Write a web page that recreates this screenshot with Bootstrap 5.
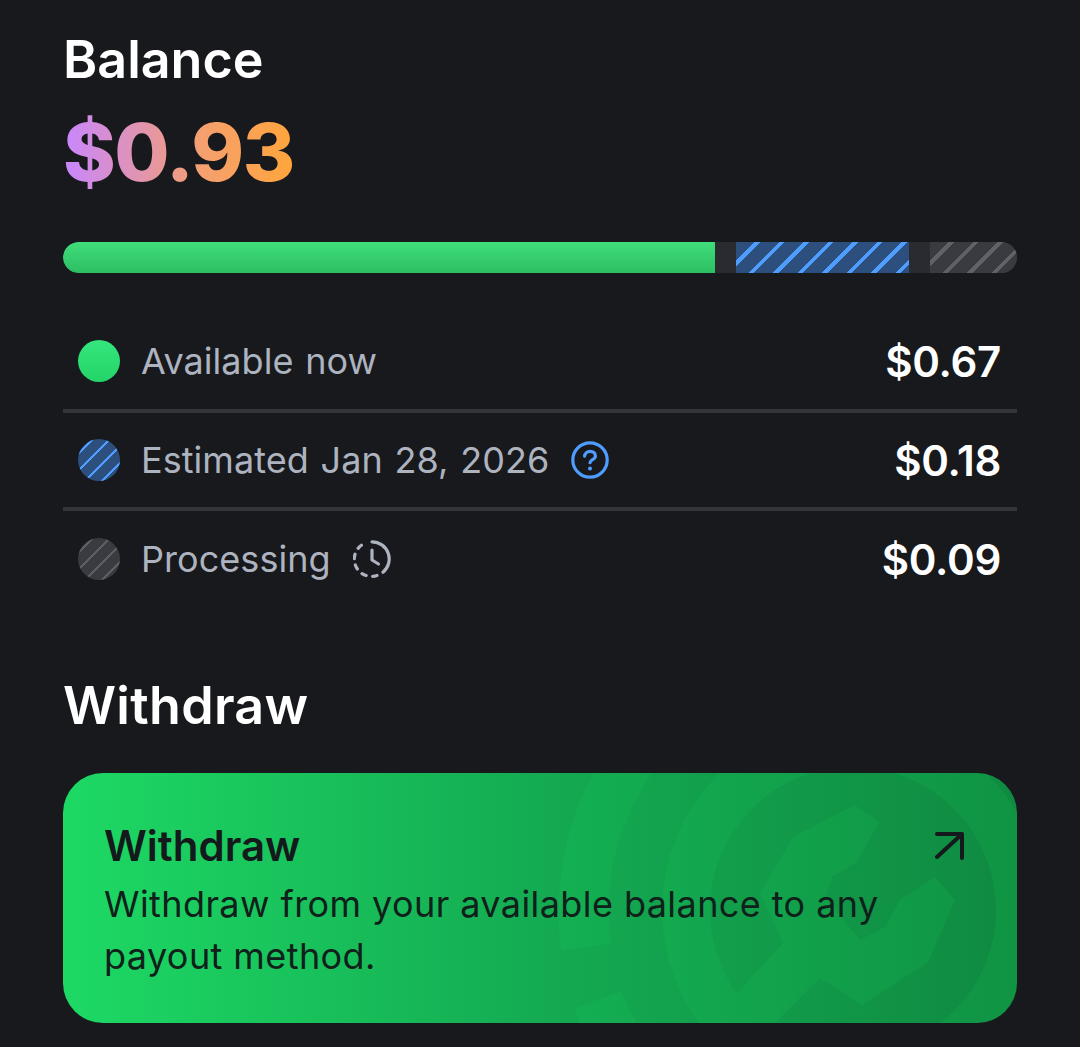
<!DOCTYPE html>
<html lang="en">
<head>
  <meta charset="UTF-8">
  <meta name="viewport" content="width=device-width, initial-scale=1.0">
  <title>Balance</title>
  <link href="https://cdn.jsdelivr.net/npm/bootstrap@5.3.0/dist/css/bootstrap.min.css" rel="stylesheet">
  <style>
    body { background: #17191d; font-family: Inter, "Liberation Sans", sans-serif; color: #fff; overflow: hidden; }
    .page-wrap { padding: 32px 63px 0; }
    .title-text { font-size: 52px; line-height: 56px; font-weight: 600; margin: 0; }
    .total-text { font-size: 80px; line-height: 88px; font-weight: 800; margin: 20px 0 0; letter-spacing: -1.5px; width: 232px;
      background: linear-gradient(90deg, #c886ff 0%, #f5a06f 60%, #ffa53a 100%); -webkit-background-clip: text; background-clip: text; color: transparent; }
    .split-bar { height: 31px; margin-top: 46px; background: #292b30; border-radius: 16px; overflow: hidden; }
    .seg-green { width: 652px; background: linear-gradient(180deg, #40dd7b, #2cbf62); border-radius: 16px 0 0 16px; }
    .seg-blue { width: 173px; margin-left: 21px; background: repeating-linear-gradient(135deg, #2c4f7e 0 13.3px, #4f9eff 13.3px 17.3px); }
    .seg-grey { flex: 1; margin-left: 21px; background: repeating-linear-gradient(135deg, #393b41 0 13.3px, #606268 13.3px 17.3px); }
    .legend-row { height: 98px; padding: 0 16px 0 15px; font-size: 36px; color: #adb3bf; letter-spacing: .05px; word-spacing: 1.6px; }
    .legend-row + .legend-row { border-top: 4px solid #33353b; }
    .legend-first { margin-top: 40px; height: 96px; }
    .legend-last { padding-top: 2px; }
    .dot-mark { width: 42px; height: 42px; border-radius: 50%; margin-right: 21px; flex: none; }
    .dot-green { background: linear-gradient(180deg, #35e67d, #24d468); }
    .dot-blue { background: repeating-linear-gradient(135deg, #2c4f7e 0 9.5px, #4f9eff 9.5px 12px); }
    .dot-grey { background: repeating-linear-gradient(135deg, #393b41 0 9.5px, #5c5e65 9.5px 12px); }
    .hint-icon { margin-left: 22px; }
    .amount-text { font-size: 42px; font-weight: 600; color: #fff; letter-spacing: -.3px; }
    .section-title { font-size: 52px; line-height: 60px; font-weight: 600; margin: 71px 0 37px; letter-spacing: .3px; }
    .withdraw-box { height: 250px; border-radius: 40px; padding: 41px 41px; color: #10201a; overflow: hidden;
      background: linear-gradient(90deg, #1dd964 0%, #14ab52 50%, #0f8a41 100%); }
    .withdraw-art { position: absolute; inset: 0; width: 100%; height: 100%; }
    .withdraw-name { font-size: 42px; line-height: 64px; font-weight: 600; margin: 0; color: #14191c; }
    .withdraw-desc { font-size: 36px; line-height: 52px; margin: 0; width: 800px; letter-spacing: .42px; }
    .withdraw-arrow { position: absolute; top: 55px; right: 50px; }
    .withdraw-inner { z-index: 1; }
  </style>
</head>
<body>
  <div class="page-wrap">
    <h1 class="title-text">Balance</h1>
    <div class="total-text">$0.93</div>

    <div class="split-bar d-flex">
      <div class="seg-green"></div>
      <div class="seg-blue"></div>
      <div class="seg-grey"></div>
    </div>

    <div class="legend-row legend-first d-flex align-items-center">
      <span class="dot-mark dot-green"></span>
      <span>Available now</span>
      <span class="amount-text ms-auto">$0.67</span>
    </div>
    <div class="legend-row d-flex align-items-center">
      <span class="dot-mark dot-blue"></span>
      <span>Estimated Jan 28, 2026</span>
      <svg class="hint-icon" width="38" height="38" viewBox="0 0 38 38" fill="none" stroke="#4f9eff" stroke-width="3.2" stroke-linecap="round" stroke-linejoin="round">
        <circle cx="19" cy="19" r="17.2"/>
        <path d="M13.6 15.2c.3-3 2.6-4.900 5.500-4.900 3 0 5.300 1.900 5.300 4.600 0 3.800-5.400 3.700-5.400 6.800"/>
        <circle cx="19" cy="27.500" r="1" fill="#4f9eff" stroke-width="2"/>
      </svg>
      <span class="amount-text ms-auto">$0.18</span>
    </div>
    <div class="legend-row legend-last d-flex align-items-center">
      <span class="dot-mark dot-grey"></span>
      <span>Processing</span>
      <svg class="hint-icon" width="38" height="38" viewBox="0 0 38 38" fill="none" stroke="#adb3bf" stroke-width="3.2" stroke-linecap="round" stroke-linejoin="round">
        <path d="M19 1.800A17.200 17.200 0 0 1 30 32.200"/>
        <path d="M24 35.500A17.200 17.200 0 0 1 13 2.900" stroke-dasharray="4.500 6.500"/>
        <path d="M19 10v10l6.500 4"/>
      </svg>
      <span class="amount-text ms-auto">$0.09</span>
    </div>

    <h2 class="section-title">Withdraw</h2>

    <div class="withdraw-box position-relative">
      <svg class="withdraw-art" viewBox="63 773 954 250" fill="none">
        <g opacity=".13">
          <circle cx="853" cy="910" r="167" stroke="#1ed760" stroke-width="48"/>
          <path d="M586 947A268 268 0 0 1 640 747" stroke="#1ed760" stroke-width="50"/>
          <path d="M598 1000A270 270 0 0 0 640 1073" stroke="#1ed760" stroke-width="50"/>
          <path fill="#1ed760" d="M855 805L879 822L857 862L832 877L825 897L860 940L885 927L900 900L935 877L955 900L928 962L862 1005L820 978L775 1023L700 1023L738 992L783 943L760 893L793 837Z"/>
        </g>
      </svg>
      <div class="withdraw-inner position-relative">
        <p class="withdraw-name">Withdraw</p>
        <p class="withdraw-desc">Withdraw from your available balance to any payout method.</p>
      </div>
      <svg class="withdraw-arrow" width="32" height="32" viewBox="0 0 32 32" fill="none" stroke="#14191c" stroke-width="4" stroke-linecap="round" stroke-linejoin="round">
        <path d="M2 6H27V30M27 6L2 29"/>
      </svg>
    </div>
  </div>

  <script src="https://cdn.jsdelivr.net/npm/bootstrap@5.3.0/dist/js/bootstrap.bundle.min.js"></script>
</body>
</html>
